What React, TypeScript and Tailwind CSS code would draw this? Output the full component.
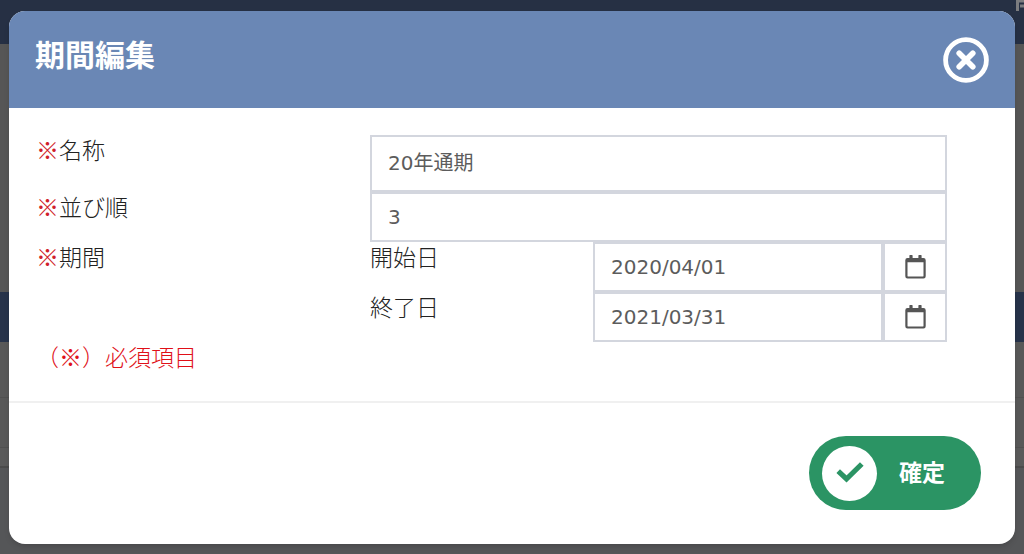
import { useState } from "react";
import type { ReactNode } from "react";

function CloseIcon() {
  return (
    <svg viewBox="0 0 46 46" className="size-[46px]" fill="none" stroke="currentColor" aria-hidden="true">
      <circle cx="23" cy="23" r="20.4" strokeWidth="4.8" />
      <path d="M16.2 16.2 29.8 29.8M29.8 16.2 16.2 29.8" strokeWidth="5.6" strokeLinecap="round" />
    </svg>
  );
}

function CalendarIcon() {
  return (
    <svg viewBox="0 0 21 24" className="h-6 w-[21px]" aria-hidden="true">
      <path
        fill="currentColor"
        fillRule="evenodd"
        d="M5 0h2a.6.6 0 0 1 .6.6V3h5.800V.6A.6.6 0 0 1 14 0h2a.6.6 0 0 1 .6.6V3h1.900A2.200 2.200 0 0 1 20.700 5.200v16.100a2.200 2.200 0 0 1-2.200 2.200H2.500A2.200 2.200 0 0 1 .3 21.300V5.200A2.200 2.200 0 0 1 2.500 3h1.900V.6A.6.6 0 0 1 5 0ZM2.500 7.200V21q0 .4.4.4h15.200q.4 0 .4-.4V7.200Z"
      />
    </svg>
  );
}

function CheckIcon() {
  return (
    <svg viewBox="0 0 28 22" className="h-[22px] w-7" fill="none" aria-hidden="true">
      <path d="M2.200 9.200 10.500 17 25.800 2" stroke="currentColor" strokeWidth="5.200" strokeLinejoin="miter" />
    </svg>
  );
}

function Label({ htmlFor, children }: { htmlFor: string; children: ReactNode }) {
  return (
    <label htmlFor={htmlFor} className="self-start">
      <span className="text-[#d0202a]">※</span>
      {children}
    </label>
  );
}

function DateRow({ id, label, initial }: { id: string; label: string; initial: string }) {
  const [value, setValue] = useState(initial);
  return (
    <div className="grid grid-cols-[223fr_354fr]">
      <label htmlFor={id} className="self-start">{label}</label>
      <div className="flex h-[50px]">
        <input
          id={id}
          value={value}
          onChange={(e) => setValue(e.target.value)}
          className="min-w-0 flex-1 border-2 border-[#d3d6de] bg-white px-4 font-['DejaVu_Sans','Noto_Sans_CJK_JP',sans-serif] text-xl font-normal text-[#5c5c5c] outline-none"
        />
        <button
          type="button"
          aria-label={`${label}を選択`}
          className="flex w-16 items-center justify-center border-2 border-[#d3d6de] bg-white text-[#555]"
        >
          <CalendarIcon />
        </button>
      </div>
    </div>
  );
}

function PageBehind() {
  return (
    <div className="absolute inset-0 flex flex-col overflow-hidden bg-[#555658]" aria-hidden="true">
      <div className="flex h-11 shrink-0 justify-end bg-[#263044]">
        <svg viewBox="0 0 8 11" className="h-[11px] w-2">
          <path d="M8 1H1.500v10M4 6h4" stroke="#7c7d80" strokeWidth="3" fill="none" />
        </svg>
      </div>
      <div className="h-[248px] shrink-0 bg-[#565656]" />
      <div className="h-[50px] shrink-0 bg-[#27334a]" />
      <div className="h-14 shrink-0 border-b border-[#505050] bg-[#585858]" />
      <div className="h-[50px] shrink-0 border-b border-[#505050] bg-[#585858]" />
      <div className="h-5 shrink-0 border-b-2 border-[#4b4b4b] bg-[#5a5a5a]" />
    </div>
  );
}

export default function App() {
  const [name, setName] = useState("20年通期");
  const [order, setOrder] = useState("3");

  return (
    <div className="relative min-h-screen font-['Noto_Sans_CJK_JP',sans-serif]">
      <PageBehind />
      <div className="relative px-[9px] pt-[11px] pb-[10px]">
        <form
          role="dialog"
          aria-labelledby="dialog-title"
          onSubmit={(e) => e.preventDefault()}
          className="overflow-hidden rounded-2xl bg-white shadow-md"
        >
          <header className="flex h-[97px] items-center justify-between bg-[#6a87b5] pr-[26px] pl-[26px] text-white">
            <h1 id="dialog-title" className="pb-[14px] text-[30px] leading-10 font-bold">期間編集</h1>
            <button type="button" aria-label="閉じる">
              <CloseIcon />
            </button>
          </header>

          <div className="border-b-2 border-[#f0f0f0] pt-[27px] pr-[68px] pb-[31px] pl-[27px] text-[23px] leading-7 font-light text-[#222]">
            <div className="grid grid-cols-[334fr_577fr]">
              <Label htmlFor="name">名称</Label>
              <input
                id="name"
                value={name}
                onChange={(e) => setName(e.target.value)}
                className="h-[57px] w-full min-w-0 border-2 border-[#d3d6de] px-4 pb-1 font-['DejaVu_Sans','Noto_Sans_CJK_JP',sans-serif] text-xl font-normal text-[#5c5c5c] outline-none"
              />
              <Label htmlFor="order">並び順</Label>
              <input
                id="order"
                value={order}
                onChange={(e) => setOrder(e.target.value)}
                className="h-[50px] w-full min-w-0 border-2 border-[#d3d6de] px-4 font-['DejaVu_Sans','Noto_Sans_CJK_JP',sans-serif] text-xl font-normal text-[#5c5c5c] outline-none"
              />
              <Label htmlFor="start">期間</Label>
              <div>
                <DateRow id="start" label="開始日" initial="2020/04/01" />
                <DateRow id="end" label="終了日" initial="2021/03/31" />
              </div>
            </div>
            <p className="text-[#e01018]">（※）必須項目</p>
          </div>

          <footer className="flex justify-end pt-[33px] pr-[34px] pb-[34px]">
            <button
              type="submit"
              className="flex h-[74px] items-center gap-[22px] rounded-full bg-[#2b9464] pr-9 pl-[13px] text-[23px] font-bold text-white"
            >
              <span className="flex size-[55px] items-center justify-center rounded-full bg-white text-[#2b9464]">
                <CheckIcon />
              </span>
              <span className="pb-1">確定</span>
            </button>
          </footer>
        </form>
      </div>
    </div>
  );
}
